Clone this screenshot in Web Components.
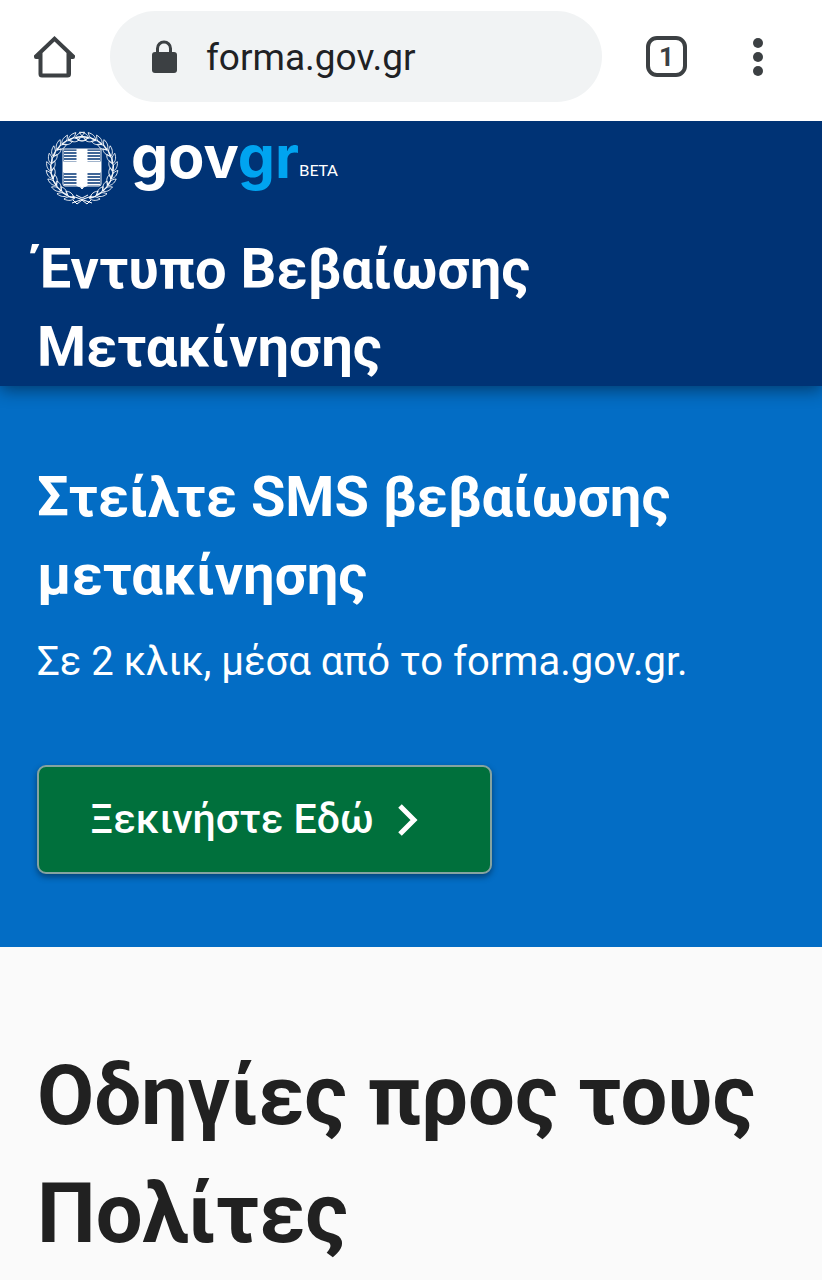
<!DOCTYPE html>
<html lang="el">
<head>
<meta charset="utf-8">
<meta name="viewport" content="width=device-width, initial-scale=1">
<title>forma.gov.gr</title>
<style>
  body {
    margin: 0;
    background: #fafafa;
    color: #212121;
    font-family: Roboto, "Noto Sans", sans-serif;
  }
</style>
</head>
<body>
<browser-bar tabs="1">forma.gov.gr</browser-bar>
<gov-header>Έντυπο Βεβαίωσης Μετακίνησης</gov-header>
<main>
  <gov-hero>
    <span slot="title">Στείλτε SMS βεβαίωσης μετακίνησης</span>
    <span slot="text">Σε 2 κλικ, μέσα από το forma.gov.gr.</span>
    <start-button slot="action">Ξεκινήστε Εδώ</start-button>
  </gov-hero>
  <gov-guidelines>Οδηγίες προς τους Πολίτες</gov-guidelines>
</main>

<script>
class BrowserBar extends HTMLElement {
  constructor() {
    super();
    this.attachShadow({ mode: "open" });
  }

  connectedCallback() {
    const tabs = this.getAttribute("tabs") || "1";

    this.shadowRoot.innerHTML = `
      <style>
        :host {
          display: block;
          position: relative;
          z-index: 2;
          background: #fff;
          color: #3c4043;
        }

        .bar {
          display: flex;
          align-items: center;
          padding: 11px 53px 19px 34px;
        }

        button {
          all: unset;
          display: flex;
          align-items: center;
          justify-content: center;
          cursor: pointer;
        }

        svg { display: block; }

        .address {
          flex: 1;
          min-width: 0;
          display: flex;
          align-items: center;
          gap: 28px;
          height: 91px;
          box-sizing: border-box;
          margin: 0 44px 0 35px;
          padding: 0 40px;
          border-radius: 46px;
          background: #f1f3f4;
        }

        .url {
          color: #202124;
          font-size: 37px;
          line-height: 46px;
          padding-top: 2px;
        }

        .tabs {
          box-sizing: border-box;
          width: 41px;
          height: 41px;
          border: 4px solid #3c4043;
          border-radius: 11px;
          font-size: 26px;
          font-weight: 700;
          line-height: 32px;
        }

        .more { margin-left: 60px; }
      </style>

      <nav class="bar" aria-label="Browser">
        <button aria-label="Home">
          <svg width="41" height="42" viewBox="0 0 41 42" fill="#3c4043">
            <path fill-rule="evenodd" d="M20.500 0L41 19.500V21Q41 23 39 23H37V38Q37 41.500 33.500 41.500H8Q4.500 41.500 4.500 38V23H2Q0 23 0 21V19.500ZM20.500 5.500L8.500 17V37.500H32.500V17Z" />
          </svg>
        </button>
        <div class="address">
          <svg width="28" height="34" viewBox="0 0 28 34">
            <path d="M7.500 13V8.500a6.500 6.500 0 0 1 13 0V13" fill="none" stroke="#3c4043" stroke-width="3" />
            <rect x="2" y="12" width="25" height="21" rx="3" fill="#3c4043" />
          </svg>
          <span class="url"><slot></slot></span>
        </div>
        <button class="tabs" aria-label="Tabs">${tabs}</button>
        <button class="more" aria-label="More">
          <svg width="22" height="40" viewBox="0 0 22 40" fill="#3c4043">
            <circle cx="11" cy="6" r="5" />
            <circle cx="11" cy="20" r="5" />
            <circle cx="11" cy="34" r="5" />
          </svg>
        </button>
      </nav>
    `;
  }
}

class GovEmblem extends HTMLElement {
  constructor() {
    super();
    this.attachShadow({ mode: "open" });
  }

  connectedCallback() {
    // two laurel branches that climb from the bottom knot to the top
    let leaves = "";
    for (let i = 0; i < 12; i++) {
      const angle = 14 + i * 14;
      leaves += `
        <g transform="rotate(${angle} 36 36)">
          <path d="M36 67C32 65.500 29 67 26 70.500C31 71.500 34.500 70 36 67Z" />
          <path d="M36 67C33 63 30 61.500 26 62.500C28.500 66.500 32 68 36 67Z" />
          <path d="M36 67L29 67" />
        </g>`;
    }

    let stripes = "";
    for (let y = 19; y < 54; y += 3) {
      stripes += `<path d="M18 ${y}.5H54" />`;
    }

    this.shadowRoot.innerHTML = `
      <style>
        :host { display: block; }
        svg { display: block; }
      </style>
      <svg width="74" height="74" viewBox="-1 -1 74 74" fill="none" stroke="#fff" role="img" aria-label="Ελληνική Δημοκρατία">
        <defs>
          <clipPath id="shield"><path d="M17 17H55V52Q55 54 53 54H41Q37 54 36 57Q35 54 31 54H19Q17 54 17 52Z" /></clipPath>
          <g id="branch" stroke-width="0.800">${leaves}</g>
        </defs>
        <use href="#branch" />
        <use href="#branch" transform="matrix(-1 0 0 1 72 0)" />
        <path d="M26 64L46 71M46 64L26 71M30 63L36 66L42 63M27 68L31 72L36 68L41 72L45 68" stroke-width="1" />
        <g clip-path="url(#shield)">
          <g stroke-width="1.500">${stripes}</g>
          <path d="M36 16V58M16 35H56" stroke-width="11" />
        </g>
        <path d="M17 17H55V52Q55 54 53 54H41Q37 54 36 57Q35 54 31 54H19Q17 54 17 52Z" />
      </svg>
    `;
  }
}

class GovHeader extends HTMLElement {
  constructor() {
    super();
    this.attachShadow({ mode: "open" });
  }

  connectedCallback() {
    this.shadowRoot.innerHTML = `
      <style>
        :host {
          display: block;
          position: relative;
          z-index: 1;
          background: #003375;
          color: #fff;
          box-shadow: 0 4px 16px rgba(0, 0, 0, 0.45);
        }

        header { padding: 4px 37px 0; }

        .logo {
          display: flex;
          align-items: flex-start;
          margin-left: 8px;
          color: inherit;
          text-decoration: none;
        }

        gov-emblem { margin: 6px 12px 0 0; }

        .name {
          font-family: Inter, sans-serif;
          font-size: 59px;
          font-weight: 700;
          line-height: 64px;
        }

        .name span { color: #00a4f0; }

        .beta {
          margin-top: 35px;
          font-family: Lato, sans-serif;
          font-size: 16px;
          line-height: 20px;
        }

        h1 {
          margin: 25px 0 0;
          font-size: 56px;
          font-weight: 700;
          line-height: 78px;
        }
      </style>

      <header>
        <a class="logo" href="#">
          <gov-emblem></gov-emblem>
          <b class="name">gov<span>gr</span></b>
          <span class="beta">BETA</span>
        </a>
        <h1><slot></slot></h1>
      </header>
    `;
  }
}

class GovHero extends HTMLElement {
  constructor() {
    super();
    this.attachShadow({ mode: "open" });
  }

  connectedCallback() {
    this.shadowRoot.innerHTML = `
      <style>
        :host {
          display: block;
          background: #036dc5;
          color: #fff;
        }

        section { padding: 72px 37px 73px; }

        h2 {
          margin: 0 0 20px;
          font-size: 56px;
          font-weight: 700;
          line-height: 78px;
        }

        p {
          margin: 0 0 75px;
          font-size: 40px;
          line-height: 56px;
        }
      </style>

      <section>
        <h2><slot name="title"></slot></h2>
        <p><slot name="text"></slot></p>
        <slot name="action"></slot>
      </section>
    `;
  }
}

class StartButton extends HTMLElement {
  constructor() {
    super();
    this.attachShadow({ mode: "open" });
  }

  connectedCallback() {
    this.shadowRoot.innerHTML = `
      <style>
        :host { display: flex; }

        button {
          display: flex;
          align-items: center;
          gap: 24px;
          margin: 0;
          padding: 24px 72px 24px 51px;
          border: 2px solid #85a3a0;
          border-radius: 9px;
          background: #00703c;
          box-shadow: 0 3px 6px rgba(0, 0, 0, 0.4);
          color: #fff;
          font-family: inherit;
          font-size: 41px;
          font-weight: 500;
          line-height: 57px;
          cursor: pointer;
        }
        button:hover { background: #005a30; }

        svg { display: block; }
      </style>

      <button type="button">
        <slot></slot>
        <svg width="20" height="32" viewBox="0 0 20 32" fill="none" stroke="#fff" stroke-width="5">
          <path d="M2 2L16 16L2 30" />
        </svg>
      </button>
    `;
  }
}

class GovGuidelines extends HTMLElement {
  constructor() {
    super();
    this.attachShadow({ mode: "open" });
  }

  connectedCallback() {
    this.shadowRoot.innerHTML = `
      <style>
        :host {
          display: block;
          background: #fafafa;
          color: #212121;
        }

        section { padding: 90px 37px 0; }

        h2 {
          margin: 0;
          font-size: 83px;
          font-weight: 700;
          line-height: 118px;
        }
      </style>

      <section>
        <h2><slot></slot></h2>
      </section>
    `;
  }
}

customElements.define("browser-bar", BrowserBar);
customElements.define("gov-emblem", GovEmblem);
customElements.define("gov-header", GovHeader);
customElements.define("gov-hero", GovHero);
customElements.define("start-button", StartButton);
customElements.define("gov-guidelines", GovGuidelines);
</script>
</body>
</html>
